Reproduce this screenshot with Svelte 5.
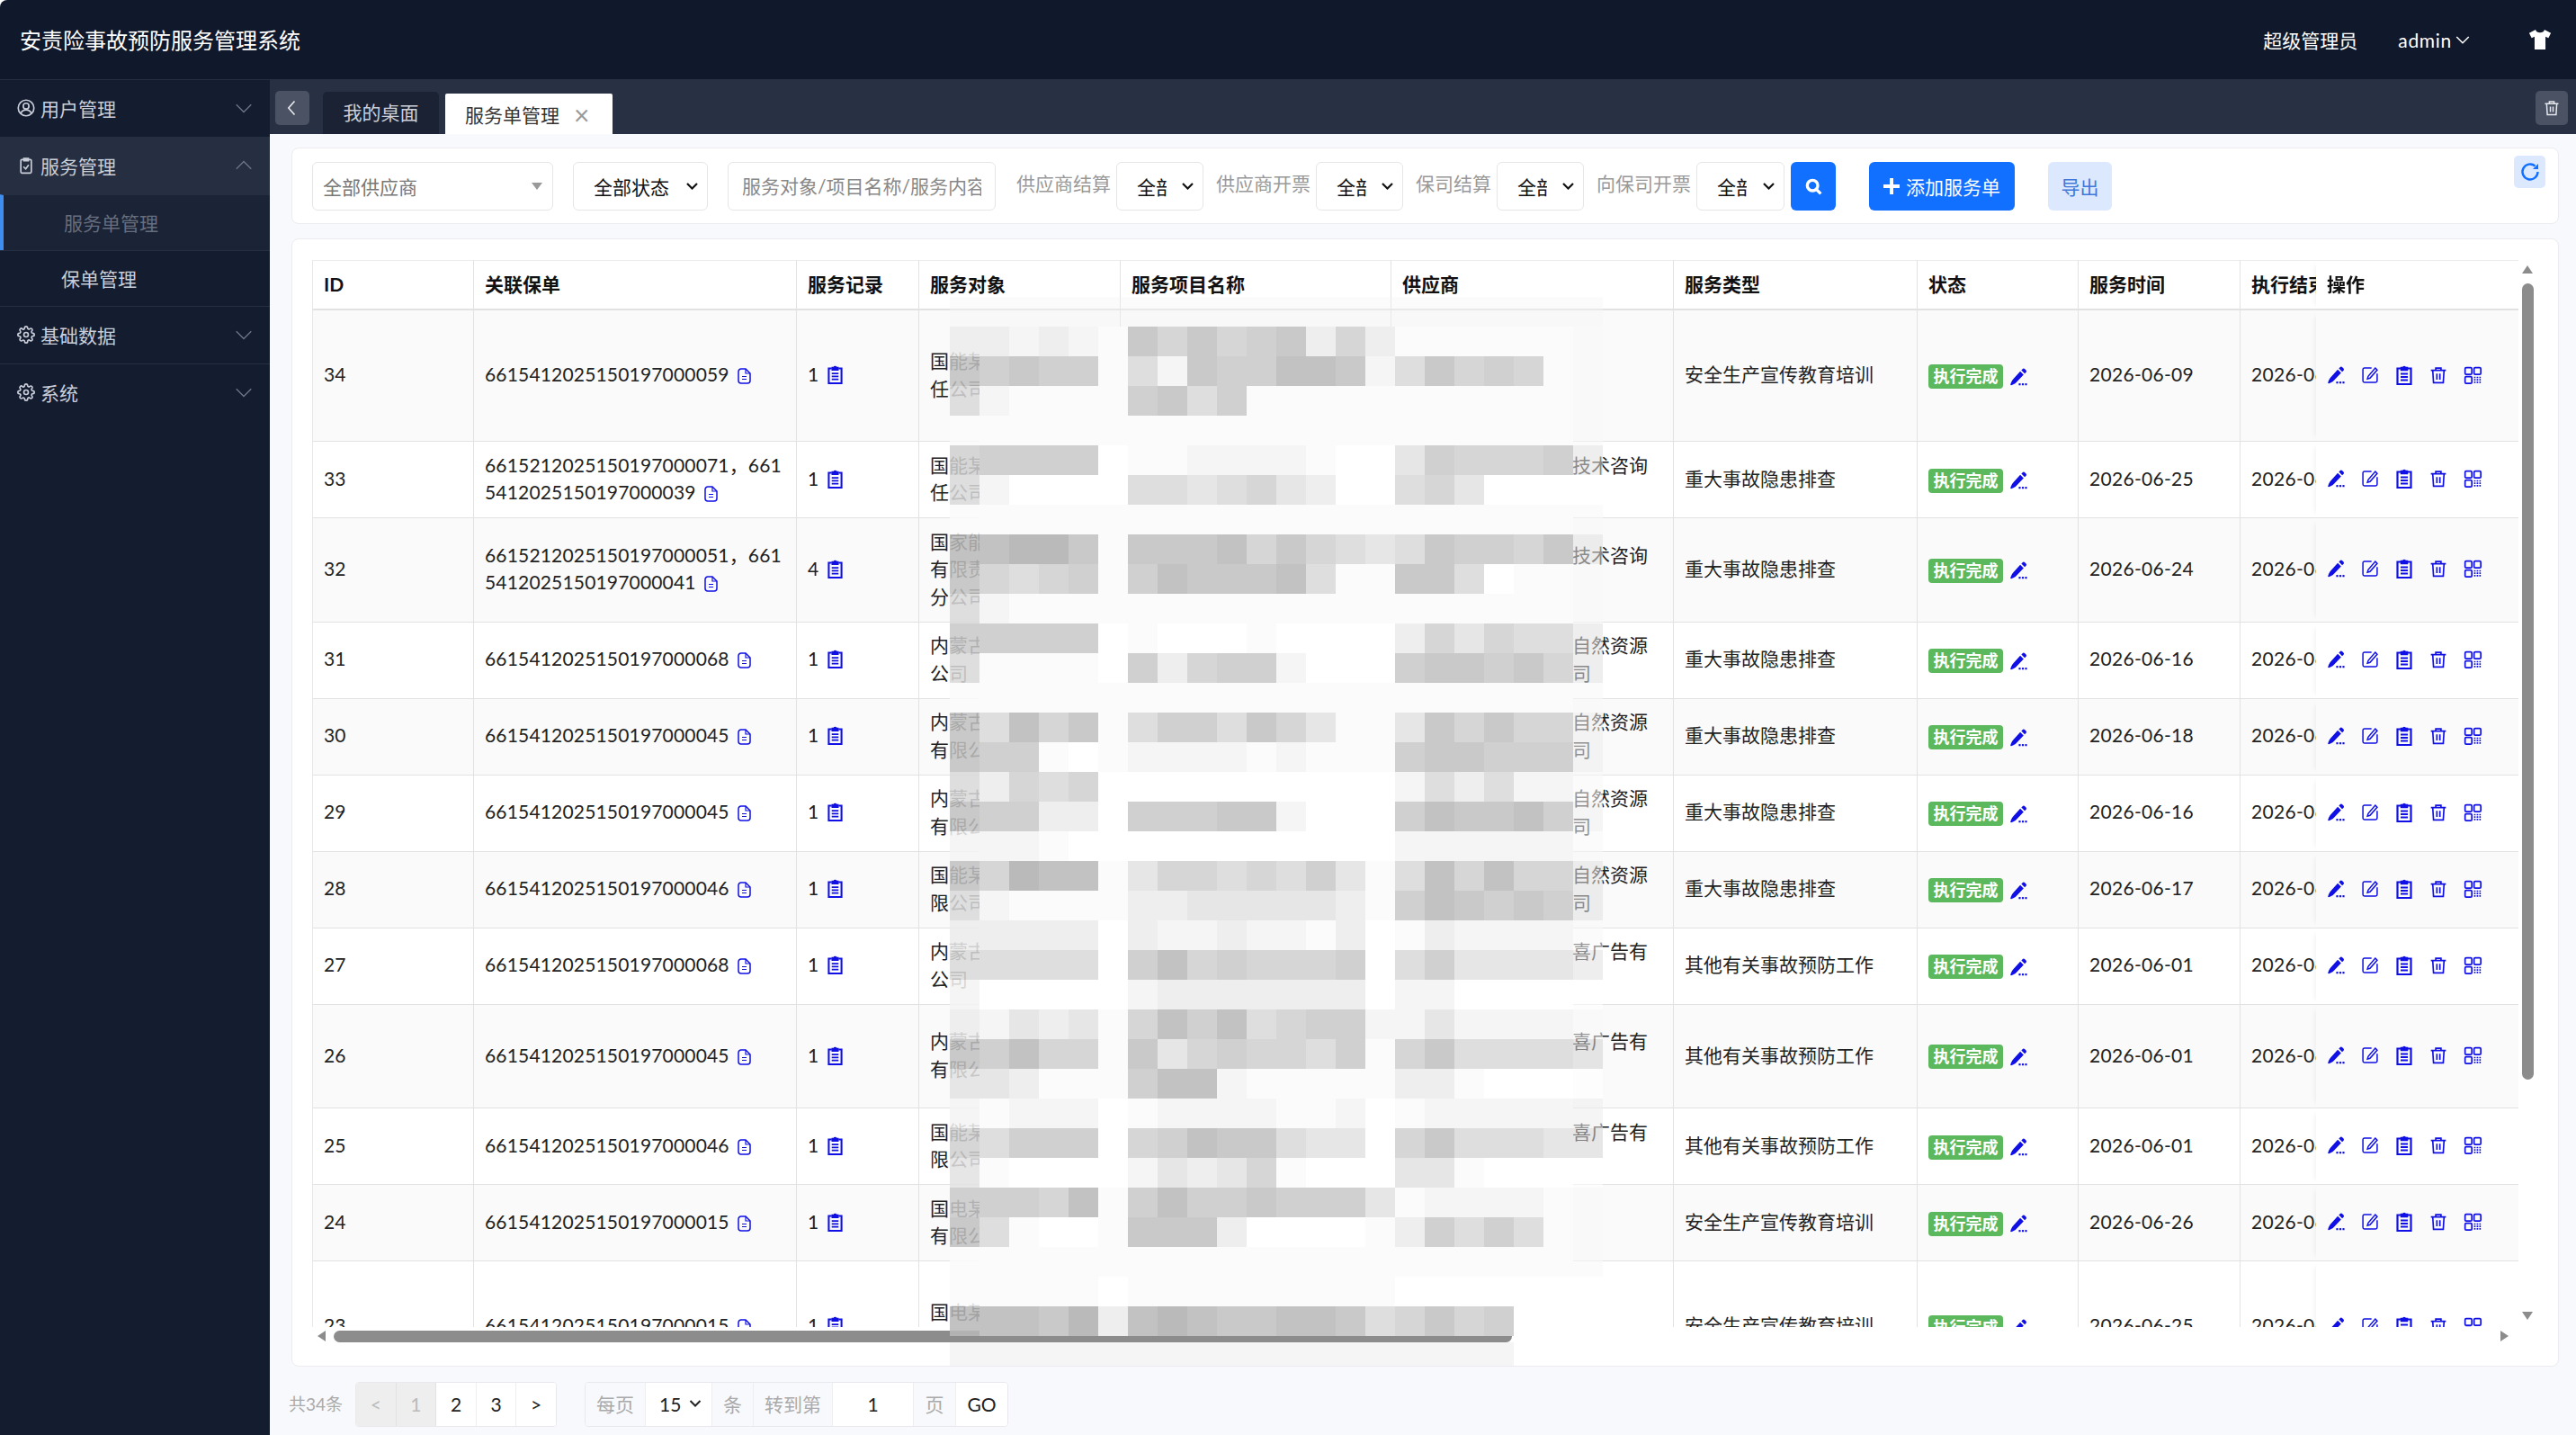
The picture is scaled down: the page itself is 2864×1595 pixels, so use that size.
<script lang="ts">
	const X = "某";
	const fill = (n: number) => X.repeat(n);

	// Redacted names sit under the mosaic, only their first glyphs show
	const rows = [
		{ id: 34, code: "6615412025150197000059", rec: 1, target: "国能某" + fill(6) + "任公司", project: fill(40), vendor: fill(9), type: "安全生产宣传教育培训", date: "2026-06-09" },
		{ id: 33, code: "6615212025150197000071，6615412025150197000039", rec: 1, target: "国能某" + fill(6) + "任公司", project: fill(20), vendor: fill(9) + "技术咨询" + fill(6), type: "重大事故隐患排查", date: "2026-06-25" },
		{ id: 32, code: "6615212025150197000051，6615412025150197000041", rec: 4, target: "国家能" + fill(6) + "有限责" + fill(6) + "分公司", project: fill(20), vendor: fill(9) + "技术咨询" + fill(6), type: "重大事故隐患排查", date: "2026-06-24" },
		{ id: 31, code: "6615412025150197000068", rec: 1, target: "内蒙古" + fill(6) + "公司", project: fill(20), vendor: fill(9) + "自然资源" + fill(9) + "司", type: "重大事故隐患排查", date: "2026-06-16" },
		{ id: 30, code: "6615412025150197000045", rec: 1, target: "内蒙古" + fill(6) + "有限公司", project: fill(20), vendor: fill(9) + "自然资源" + fill(9) + "司", type: "重大事故隐患排查", date: "2026-06-18" },
		{ id: 29, code: "6615412025150197000045", rec: 1, target: "内蒙古" + fill(6) + "有限公司", project: fill(20), vendor: fill(9) + "自然资源" + fill(9) + "司", type: "重大事故隐患排查", date: "2026-06-16" },
		{ id: 28, code: "6615412025150197000046", rec: 1, target: "国能某" + fill(6) + "限公司", project: fill(20), vendor: fill(9) + "自然资源" + fill(9) + "司", type: "重大事故隐患排查", date: "2026-06-17" },
		{ id: 27, code: "6615412025150197000068", rec: 1, target: "内蒙古" + fill(6) + "公司", project: fill(20), vendor: fill(9) + "喜广告有" + fill(6), type: "其他有关事故预防工作", date: "2026-06-01" },
		{ id: 26, code: "6615412025150197000045", rec: 1, target: "内蒙古" + fill(6) + "有限公司", project: fill(30), vendor: fill(9) + "喜广告有" + fill(6), type: "其他有关事故预防工作", date: "2026-06-01" },
		{ id: 25, code: "6615412025150197000046", rec: 1, target: "国能某" + fill(6) + "限公司", project: fill(20), vendor: fill(9) + "喜广告有" + fill(6), type: "其他有关事故预防工作", date: "2026-06-01" },
		{ id: 24, code: "6615412025150197000015", rec: 1, target: "国电某" + fill(6) + "有限公司", project: fill(20), vendor: fill(9), type: "安全生产宣传教育培训", date: "2026-06-26" },
		{ id: 23, code: "6615412025150197000015", rec: 1, target: "国电某" + fill(6) + "有限公司", project: fill(40), vendor: fill(5), type: "安全生产宣传教育培训", date: "2026-06-25" }
	];

	const cols = ["ID", "关联保单", "服务记录", "服务对象", "服务项目名称", "供应商", "服务类型", "状态", "服务时间", "执行结束"];
	const widths = [180, 359, 136, 224, 301, 314, 271, 179, 180, 180, 225];

	// Pixelated redaction: one row per 33px band, digit = how dark the block is
	const shades: Record<string, number> = { 0: 255, 1: 251, 2: 245, 3: 238, 4: 230, 5: 222, 6: 214, 7: 208, 8: 201, 9: 194, a: 186 };
	const mosaic = [
		"1111111111111111111111", "3323218686783631111111", "8787715287799825867611", "5211117857111111111111",
		"1111111111111111111111", "6777701122221004766673", "5200005545643005640000", "1111111111111111111111",
		"99aa818889686545877683", "8656717988895118850111", "5211111111111111111111", "7777701000100003646553",
		"5111107367720007887863", "1111111111111111111111", "8596815775864114868662", "8771012222121117887772",
		"5365600000000002535221", "8773307778820007988972", "2221000000000002222221", "86a99146656574 15969663",
		"5211113344444317987873", "3333303223221301322221", "5555507967666705744443", "2000002333333302200000",
		"3243416979567722422221", "8796618467665716855554", "4431117992111113310000", "2122201222211201222222",
		"6577706798854406855544", "4100002434610004410000", "7776917977877741222211", "8510018883000013757511",
		"1111111111111111111111", "1111101111111110000000", "9998a39a9889985 6867", "2222222222222222222"
	].map((r) => r.replace(" ", ""));

	const blocks = mosaic.flatMap((row, r) =>
		[...row].map((c, k) => ({
			x: k * 33,
			y: r === 35 ? 1162 : r * 33,
			h: r === 35 ? 26 : 33,
			g: shades[c],
			// top band and the two outer columns let what is underneath show through
			a: r === 0 ? 0.35 : k === 0 ? 0.86 : k === 21 ? 0.55 : 1
		}))
	);
	const blockFill = (g: number, a: number) => {
		const v = Math.round((g - (1 - a) * 255) / a);
		return `rgba(${v},${v},${v},${a})`;
	};

	const menu = [
		{ label: "用户管理", icon: "user" },
		{ label: "服务管理", icon: "task", open: true },
		{ label: "基础数据", icon: "gear" },
		{ label: "系统", icon: "gear" }
	];
</script>

{#snippet chevron(size = 18, dir = "down")}
	<svg class="chev" width={size} height={size} viewBox="0 0 24 24" fill="none" stroke="currentColor" stroke-width="2">
		{#if dir === "down"}<path d="M3 8l9 9 9-9" />{:else if dir === "up"}<path d="M3 16l9-9 9 9" />{:else}<path d="M15 3l-8 9 8 9" />{/if}
	</svg>
{/snippet}

{#snippet gear()}
	<svg width="20" height="20" viewBox="0 0 24 24" fill="none" stroke="currentColor" stroke-width="2">
		<circle cx="12" cy="12" r="3" />
		<path d="M19.4 15a1.65 1.65 0 0 0 .33 1.82l.06.06a2 2 0 1 1-2.83 2.83l-.06-.06a1.65 1.65 0 0 0-1.82-.33 1.65 1.65 0 0 0-1 1.51V21a2 2 0 1 1-4 0v-.09A1.65 1.65 0 0 0 9 19.4a1.65 1.65 0 0 0-1.82.33l-.06.06a2 2 0 1 1-2.83-2.83l.06-.06a1.65 1.65 0 0 0 .33-1.82 1.65 1.65 0 0 0-1.51-1H3a2 2 0 1 1 0-4h.09A1.65 1.65 0 0 0 4.6 9a1.65 1.65 0 0 0-.33-1.82l-.06-.06a2 2 0 1 1 2.83-2.83l.06.06a1.65 1.65 0 0 0 1.82.33H9a1.65 1.65 0 0 0 1-1.51V3a2 2 0 1 1 4 0v.09a1.65 1.65 0 0 0 1 1.51 1.65 1.65 0 0 0 1.82-.33l.06-.06a2 2 0 1 1 2.83 2.83l-.06.06a1.65 1.65 0 0 0-.33 1.82V9a1.65 1.65 0 0 0 1.51 1H21a2 2 0 1 1 0 4h-.09a1.65 1.65 0 0 0-1.51 1z" />
	</svg>
{/snippet}

{#snippet user()}
	<svg width="20" height="20" viewBox="0 0 24 24" fill="none" stroke="currentColor" stroke-width="2">
		<circle cx="12" cy="12" r="10.5" />
		<circle cx="12" cy="9.5" r="3.8" />
		<path d="M5 19c1.5-3 4-4.4 7-4.4s5.500 1.400 7 4.400" />
	</svg>
{/snippet}

{#snippet task()}
	<svg width="20" height="20" viewBox="0 0 24 24" fill="none" stroke="currentColor" stroke-width="2">
		<rect x="5" y="4" width="14" height="18" rx="1.500" />
		<path d="M9 2.500h6v3H9zM8.500 13.500l3 3 4-5.500" />
	</svg>
{/snippet}

{#snippet pen(size = 20)}
	<svg width={size} height={size} viewBox="0 0 24 24" fill="currentColor">
		<path d="M17.500 1.500a2.300 2.300 0 0 1 3.200 0l1.300 1.300a2.300 2.300 0 0 1 0 3.200L20.500 7.500 16 3zM14.500 4.500 19 9 9 19.500c-1.500 1.500-4.500 3-6.500 3.500-.6.100-1.200-.400-1-1 .5-2 2-5.500 3.500-7z" />
		<rect x="12.500" y="20.500" width="2.600" height="2.600" /><rect x="16.700" y="20.500" width="2.600" height="2.600" /><rect x="20.900" y="20.500" width="2.600" height="2.600" />
	</svg>
{/snippet}

{#snippet edit()}
	<svg width="20" height="20" viewBox="0 0 24 24" fill="none" stroke="currentColor" stroke-width="1.800">
		<path d="M14 2.500H4.500a2 2 0 0 0-2 2v15a2 2 0 0 0 2 2h15a2 2 0 0 0 2-2V10" />
		<path d="M19 2.500l2.500 2.500L12 16l-3.500 1 1-3.500z" />
	</svg>
{/snippet}

{#snippet clip(w = 20, h = 22)}
	<svg width={w} height={h} viewBox="3 1 18 22" fill="none" stroke="currentColor" stroke-width="2.200">
		<path d="M8 4.500H4.500v17.500h15V4.500H16" />
		<path d="M8.500 3.500h2a1.600 1.600 0 0 1 3 0h2v3h-7z" fill="currentColor" stroke-width="1.500" />
		<path d="M8 10.500h8M8 14h8M8 17.500h8" stroke-width="1.800" />
	</svg>
{/snippet}

{#snippet trash(size = 20)}
	<svg width={size} height={size} viewBox="0 0 24 24" fill="none" stroke="currentColor" stroke-width="2">
		<path d="M2 5.500h20M8.500 5V2.500h7V5M4.500 6l1 16h13l1-16M10 10v8M14 10v8" />
	</svg>
{/snippet}

{#snippet qr()}
	<svg width="20" height="20" viewBox="0 0 24 24" fill="none" stroke="currentColor" stroke-width="2">
		<rect x="2" y="2" width="9" height="9" rx="1.500" />
		<rect x="14" y="2" width="9" height="9" rx="1.500" />
		<rect x="2" y="14" width="9" height="9" rx="1.500" />
		<path d="M15 14v9M18.500 14v9M22 14v9" stroke-width="2" stroke-dasharray="2 1.200" />
	</svg>
{/snippet}

{#snippet doc()}
	<svg class="doc" width="15" height="18" viewBox="0 0 15 18" fill="none" stroke="currentColor" stroke-width="1.500">
		<path d="M4 1h5l5 5v8a3 3 0 0 1-3 3H4a3 3 0 0 1-3-3V4a3 3 0 0 1 3-3z" />
		<path d="M9 1v5h5M5 9.500h5M5 12.500h5" stroke-width="1.200" />
	</svg>
{/snippet}

{#snippet pick(text: string, cls: string)}
	<div class="sel {cls}">
		<span class="sel-text">{text}</span>
		<svg width="13" height="8" viewBox="0 0 13 8" fill="none" stroke="currentColor" stroke-width="2.200"><path d="M1 1l5.500 5.500L12 1" /></svg>
	</div>
{/snippet}

<div class="app">
	<header class="topbar">
		<div class="brand">安责险事故预防服务管理系统</div>
		<div class="user-box">
			<span class="role">超级管理员</span>
			<span class="admin">admin{@render chevron(18)}</span>
			<svg class="shirt" width="28" height="22" viewBox="0 0 24 20" fill="currentColor">
				<path d="M7.500 0 1 3.500l2.500 5L6.500 7v13h11V7l3 1.500 2.500-5L16.500 0c-.5 2-2.200 3-4.500 3s-4-1-4.500-3z" />
			</svg>
		</div>
	</header>

	<div class="body">
		<nav class="side">
			{#each menu as item}
				<div class="menu-item" class:open={item.open}>
					<span class="menu-icon">
						{#if item.icon === "user"}{@render user()}{:else if item.icon === "task"}{@render task()}{:else}{@render gear()}{/if}
					</span>
					<span class="menu-label">{item.label}</span>
					<span class="menu-arrow">{@render chevron(22, item.open ? "up" : "down")}</span>
				</div>
				{#if item.open}
					<div class="sub active">服务单管理</div>
					<div class="sub">保单管理</div>
				{/if}
			{/each}
		</nav>

		<main class="main">
			<div class="tabbar">
				<button class="square">{@render chevron(20, "left")}</button>
				<div class="tab">我的桌面</div>
				<div class="tab current">服务单管理<span class="close">×</span></div>
				<button class="square trash-btn">{@render trash(18)}</button>
			</div>

			<div class="content">
				<section class="card filters">
					<div class="combo"><span>全部供应商</span><i></i></div>
					{@render pick("全部状态", "status")}
					<input class="keyword" placeholder="服务对象/项目名称/服务内容" />
					<span class="lab first">供应商结算</span>
					{@render pick("全部", "small")}
					<span class="lab">供应商开票</span>
					{@render pick("全部", "small")}
					<span class="lab">保司结算</span>
					{@render pick("全部", "small")}
					<span class="lab">向保司开票</span>
					{@render pick("全部", "small last")}
					<button class="btn search" aria-label="搜索">
						<svg width="20" height="20" viewBox="0 0 24 24" fill="none" stroke="currentColor" stroke-width="4"><circle cx="11" cy="11" r="7" /><path d="M16 16l6 6" /></svg>
					</button>
					<button class="btn add">
						<svg width="18" height="18" viewBox="0 0 18 18" fill="none" stroke="currentColor" stroke-width="4"><path d="M9 0v18M0 9h18" /></svg>
						添加服务单
					</button>
					<button class="btn export">导出</button>
					<button class="refresh" aria-label="刷新">
						<svg width="24" height="26" viewBox="0 0 24 24" fill="none" stroke="currentColor" stroke-width="2.400"><path d="M20.500 12a8.500 8.500 0 1 1-3-6.500" /><path d="M21 3v6h-6z" fill="currentColor" stroke="none" /></svg>
					</button>
				</section>

				<section class="card grid-card">
					<div class="scroll">
						<table>
							<colgroup>
								{#each widths as w}<col style="width:{w}px" />{/each}
							</colgroup>
							<thead>
								<tr>
									{#each cols as c}<th>{c}</th>{/each}
									<th class="fixed">操作</th>
								</tr>
							</thead>
							<tbody>
								{#each rows as row, i}
									<tr class:odd={i % 2 === 0}>
										<td>{row.id}</td>
										<td class="code">{row.code}<span class="link doc-link">{@render doc()}</span></td>
										<td>{row.rec}<span class="link rec">{@render clip(17, 21)}</span></td>
										<td class="wrap">{row.target}</td>
										<td class="wrap masked">{row.project}</td>
										<td class="wrap">{row.vendor}</td>
										<td>{row.type}</td>
										<td><span class="badge">执行完成</span><span class="link badge-pen">{@render pen(20)}</span></td>
										<td class="date">{row.date}</td>
										<td class="date">{row.date}</td>
										<td class="fixed">
											<div class="ops link">
												{@render pen()}
												{@render edit()}
												{@render clip()}
												{@render trash()}
												{@render qr()}
											</div>
										</td>
									</tr>
								{/each}
							</tbody>
						</table>
					</div>
					<div class="vbar">
						<i class="tri up"></i>
						<div class="vthumb"></div>
						<i class="tri down"></i>
					</div>
					<div class="hbar">
						<i class="tri left"></i>
						<div class="hthumb"></div>
						<i class="tri right"></i>
					</div>
					<svg class="mosaic" width="726" height="1188">
						{#each blocks as b}
							<rect x={b.x} y={b.y} width="33" height={b.h} fill={blockFill(b.g, b.a)} />
						{/each}
					</svg>
				</section>

				<div class="pager">
					<span class="total">共34条</span>
					<div class="group first-group">
						<span class="cell off">&lt;</span>
						<span class="cell off">1</span>
						<span class="cell">2</span>
						<span class="cell">3</span>
						<span class="cell">&gt;</span>
					</div>
					<div class="group second">
						<span class="cell note w67">每页</span>
						<div class="cell per"><span>15</span><svg width="14" height="8" viewBox="0 0 13 8" fill="none" stroke="currentColor" stroke-width="2"><path d="M1 1l5.500 5.500L12 1" /></svg></div>
						<span class="cell note w46">条</span>
						<span class="cell note w88">转到第</span>
						<span class="cell w90">1</span>
						<span class="cell note w47">页</span>
						<span class="cell w57">GO</span>
					</div>
				</div>
			</div>
		</main>
	</div>
</div>

<style>
	:global(body) {
		margin: 0;
		background: #fff;
	}

	.app {
		width: 2864px;
		height: 1595px;
		overflow: hidden;
		display: flex;
		flex-direction: column;
		font: 21px Lato, "Noto Sans CJK SC", sans-serif;
		color: #222;
	}

	button,
	input {
		font: inherit;
	}

	/* top bar */
	.topbar {
		height: 88px;
		flex: none;
		display: flex;
		align-items: center;
		justify-content: space-between;
		padding: 0 26px 0 22px;
		background: #10182b;
		color: #fff;
		border-top-left-radius: 8px;
	}

	.brand {
		font-size: 24px;
		padding-bottom: 2px;
	}

	.user-box {
		display: flex;
		align-items: center;
	}

	.admin {
		display: flex;
		align-items: center;
		gap: 3px;
		margin-left: 45px;
		letter-spacing: 0.7px;
	}

	.shirt {
		margin-left: 63px;
	}

	.body {
		flex: 1;
		display: flex;
		min-height: 0;
	}

	/* side menu */
	.side {
		width: 300px;
		flex: none;
		background: #141c30;
		color: #c9ced8;
	}

	.menu-item {
		height: 64px;
		display: flex;
		align-items: center;
		padding: 0 18px 2px 19px;
		border-top: 1px solid #262e42;
		box-sizing: border-box;
	}

	.menu-item.open {
		background: #262e41;
	}

	.menu-icon {
		width: 26px;
		display: flex;
	}

	.menu-label {
		flex: 1;
	}

	.menu-arrow {
		display: flex;
		color: #6c7486;
	}

	.menu-arrow :global(svg) {
		stroke-width: 1.500;
	}

	.sub {
		height: 62px;
		display: flex;
		align-items: center;
		padding: 0 0 2px 68px;
		border-top: 1px solid #262e42;
		box-sizing: border-box;
	}

	.sub.active {
		background: #1b2337;
		color: #666e7e;
		padding-left: 67px;
		border-left: 4px solid #3d8ef0;
	}

	.main {
		flex: 1;
		min-width: 0;
		background: #f8f9fd;
		display: flex;
		flex-direction: column;
	}

	/* tabs */
	.tabbar {
		height: 61px;
		flex: none;
		display: flex;
		align-items: flex-end;
		background: #283143;
		padding: 0 9px 0 6px;
	}

	.square {
		width: 38px;
		height: 38px;
		margin-bottom: 10px;
		padding: 0;
		border: 0;
		border-radius: 5px;
		background: #4a5264;
		color: #e6e8ec;
		display: flex;
		align-items: center;
		justify-content: center;
	}

	.trash-btn {
		width: 36px;
		margin-left: auto;
	}

	.tab {
		height: 47px;
		margin-left: 15px;
		width: 129px;
		box-sizing: border-box;
		padding-top: 7px;
		text-align: center;
		background: #1a2234;
		color: #c9ced8;
		border-radius: 5px 5px 0 0;
	}

	.tab.current {
		margin-left: 7px;
		width: 186px;
		height: 45px;
		background: #fff;
		color: #333;
		border-radius: 2px 2px 0 0;
		padding: 8px 0 0 22px;
		text-align: left;
	}

	.close {
		margin-left: 16px;
		color: #999;
		font-size: 30px;
		line-height: 21px;
		vertical-align: -3px;
	}

	/* page body */
	.content {
		flex: 1;
		min-height: 0;
		padding: 15px 19px 0 24px;
		display: flex;
		flex-direction: column;
		gap: 16px;
	}

	.card {
		background: #fff;
		border: 1px solid #ececf0;
		border-radius: 8px;
		box-sizing: border-box;
		position: relative;
	}

	.filters {
		height: 85px;
		flex: none;
		display: flex;
		align-items: center;
		padding-left: 22px;
	}

	.combo {
		width: 268px;
		height: 54px;
		box-sizing: border-box;
		border: 1px solid #e6e6e6;
		border-radius: 6px;
		padding: 0 11px;
		display: flex;
		align-items: center;
		justify-content: space-between;
		color: #777;
	}

	.combo i {
		border: 6px solid transparent;
		border-top: 8px solid #999;
		border-bottom: 0;
	}

	.sel {
		height: 54px;
		flex: none;
		box-sizing: border-box;
		border: 1px solid #e6e6e6;
		border-radius: 6px;
		background: #fff;
		color: #111;
		padding: 0 10px 0 22px;
		display: flex;
		align-items: center;
		justify-content: space-between;
	}

	.sel-text {
		overflow: hidden;
		white-space: nowrap;
	}

	.status {
		width: 150px;
		margin-left: 22px;
	}

	.keyword {
		width: 298px;
		height: 54px;
		box-sizing: border-box;
		margin-left: 22px;
		border: 1px solid #e6e6e6;
		border-radius: 6px;
		padding: 0 15px;
	}

	.keyword::placeholder {
		color: #888;
	}

	.small {
		width: 97px;
	}

	.small .sel-text {
		width: 33px;
	}

	.last {
		width: 98px;
	}

	.lab {
		margin: 0 6px 0 14px;
		color: #999;
		position: relative;
		top: -4px;
	}

	.lab.first {
		margin-left: 23px;
	}

	.btn {
		height: 54px;
		border: 0;
		border-radius: 6px;
		background: #1170ff;
		color: #fff;
		padding: 0;
	}

	.search {
		width: 50px;
		margin-left: 7px;
		display: flex;
		align-items: center;
		justify-content: center;
	}

	.add {
		width: 162px;
		margin-left: 37px;
		display: flex;
		align-items: center;
		justify-content: center;
		gap: 7px;
	}

	.export {
		width: 71px;
		margin-left: 37px;
		background: #dbe8fe;
		color: #3f78d8;
	}

	.refresh {
		position: absolute;
		top: 8px;
		right: 14px;
		width: 35px;
		height: 36px;
		padding: 0;
		border: 0;
		border-radius: 5px;
		background: #dbe8fe;
		color: #1170ff;
		display: flex;
		align-items: center;
		justify-content: center;
	}

	/* table */
	.grid-card {
		height: 1254px;
		flex: none;
		padding: 23px 24px 0 22px;
		display: grid;
		grid-template-columns: 2453px 20px;
		grid-template-rows: 1186px 20px;
	}

	.scroll {
		overflow: hidden;
	}

	table {
		table-layout: fixed;
		width: 2549px;
		border-collapse: separate;
		border-spacing: 0;
	}

	th,
	td {
		text-align: left;
		padding: 10.500px 12px 12.500px;
		line-height: 30.500px;
		border-right: 1px solid #e2e2e2;
		border-bottom: 1px solid #e2e2e2;
		white-space: nowrap;
		overflow: hidden;
		font-weight: 400;
		color: #222;
	}

	th {
		height: 56px;
		box-sizing: border-box;
		font-weight: 700;
		border-top: 1px solid #ececec;
		border-bottom-width: 2px;
		padding: 0 12px;
		color: #111;
	}

	th:first-child,
	td:first-child {
		border-left: 1px solid #e8e8e8;
	}

	.odd td {
		background: #fafafa;
	}

	tbody tr:not(.odd) td {
		background: #fff;
	}

	.wrap,
	.code {
		white-space: normal;
		word-break: break-all;
	}

	td.masked {
		color: transparent;
	}

	.code {
		letter-spacing: 0.17px;
	}

	.date {
		letter-spacing: 0.3px;
	}

	.fixed {
		position: sticky;
		right: 0;
		border-right: 0;
		background: #fff;
		box-shadow: -6px 0 6px -6px rgba(0, 0, 0, 0.08);
	}

	.link {
		color: #1010e6;
	}

	.doc-link {
		margin-left: 9px;
	}

	.rec {
		margin-left: 10px;
	}

	.rec :global(svg),
	.doc {
		vertical-align: -3px;
	}

	.badge {
		display: inline-block;
		width: 83px;
		height: 27px;
		line-height: 27px;
		text-align: center;
		border-radius: 4px;
		background: #5cb85c;
		color: #fff;
		font-size: 18px;
		font-weight: 700;
		vertical-align: middle;
	}

	.badge-pen {
		margin-left: 7px;
	}

	.badge-pen :global(svg) {
		vertical-align: middle;
	}

	.ops {
		display: flex;
		align-items: center;
		gap: 18px;
	}

	/* scrollbars */
	.vbar {
		position: relative;
	}

	.vthumb {
		position: absolute;
		top: 26px;
		left: 4px;
		width: 13px;
		height: 885px;
		border-radius: 7px;
		background: #8c8c8c;
	}

	.hbar {
		position: relative;
		grid-column: 1 / 3;
	}

	.hthumb {
		position: absolute;
		left: 24px;
		top: 4px;
		width: 1310px;
		height: 13px;
		border-radius: 7px;
		background: #8c8c8c;
	}

	.tri {
		position: absolute;
		width: 0;
		height: 0;
		border: 6px solid transparent;
	}

	.up {
		top: 6px;
		left: 4px;
		border-top: 0;
		border-bottom: 9px solid #8c8c8c;
	}

	.down {
		bottom: 8px;
		left: 4px;
		border-bottom: 0;
		border-top: 9px solid #8c8c8c;
	}

	.left {
		left: 6px;
		top: 4px;
		border-left: 0;
		border-right: 9px solid #8c8c8c;
	}

	.right {
		left: 2433px;
		top: 4px;
		border-right: 0;
		border-left: 9px solid #8c8c8c;
	}

	/* redaction laid over the table */
	.mosaic {
		position: absolute;
		left: 731px;
		top: 64px;
		pointer-events: none;
	}

	/* pagination */
	.pager {
		display: flex;
		align-items: center;
		height: 50px;
		margin-top: 1px;
	}

	.total {
		color: #aaa;
		width: 74px;
		margin-left: -3px;
		padding-bottom: 3px;
		font-size: 19px;
	}

	.group {
		display: flex;
		height: 50px;
		border: 1px solid #e8e8ee;
		border-radius: 4px;
		box-sizing: border-box;
		background: #fff;
		overflow: hidden;
	}

	.first-group {
		width: 224px;
	}

	.first-group .cell {
		flex: 1;
	}

	.second {
		margin-left: 31px;
	}

	.cell {
		width: 45px;
		display: flex;
		align-items: center;
		justify-content: center;
		border-right: 1px solid #eeeeee;
		background: #fff;
		box-sizing: border-box;
		padding-bottom: 2px;
	}

	.cell:last-child {
		border-right: 0;
	}

	.off {
		background: #eeeeee;
		color: #bbb;
		border-right-color: #e2e2e2;
	}

	.note {
		background: #f8f9fc;
		color: #aaa;
	}

	.per {
		width: 74px;
		gap: 9px;
		justify-content: flex-start;
		padding-left: 15px;
	}

	.w67 { width: 67px; }
	.w46 { width: 46px; }
	.w88 { width: 88px; }
	.w90 { width: 90px; }
	.w47 { width: 47px; }
	.w57 { width: 57px; }
</style>
